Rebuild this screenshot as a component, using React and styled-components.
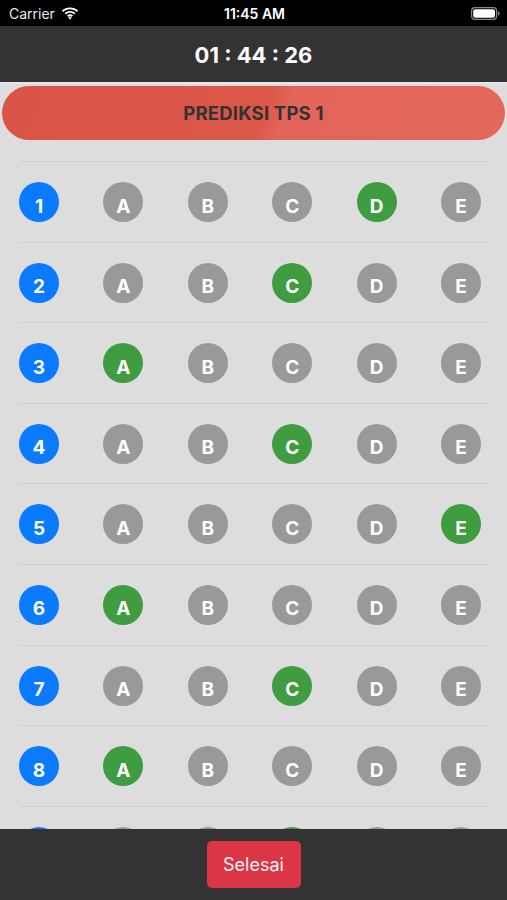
import React from "react";
import styled, { createGlobalStyle } from "styled-components";

const Global = createGlobalStyle`
  html, body { margin: 0; padding: 0; background: #dddddd; }
  body { font-family: "Inter", "Liberation Sans", sans-serif; }
  * { box-sizing: border-box; }
`;

const Screen = styled.div`
  width: 507px;
  height: 900px;
  display: flex;
  flex-direction: column;
  background: #dddddd;
  overflow: hidden;
`;

const StatusBar = styled.div`
  height: 26px;
  flex-shrink: 0;
  background: #000;
  color: #fff;
  display: grid;
  grid-template-columns: 1fr auto 1fr;
  align-items: center;
  padding: 0 7px 0 9px;
  font-size: 14px;
`;

const Carrier = styled.div`
  display: flex;
  align-items: center;
  gap: 6px;
  color: #e8e8e8;
`;

const Clock = styled.div`
  font-weight: 600;
  font-size: 14px;
`;

const BatteryWrap = styled.div`
  justify-self: end;
  display: flex;
  align-items: center;
`;

const Header = styled.div`
  height: 58px;
  flex-shrink: 0;
  background: #333333;
  color: #fff;
  display: flex;
  align-items: center;
  justify-content: center;
  font-size: 22px;
  font-weight: 700;
  padding-top: 1px;
  border-bottom: 2px solid #e6e6e6;
`;

const Content = styled.div`
  flex: 1;
  min-height: 0;
  overflow: hidden;
  display: flex;
  flex-direction: column;
  padding-top: 2px;
`;

const Banner = styled.div`
  height: 54px;
  flex-shrink: 0;
  margin: 0 2px 0 2px;
  border-radius: 27px;
  background: linear-gradient(112deg, #d95347 0%, #db5748 52%, #e2645a 56%, #e4675b 100%);
  color: #333;
  display: flex;
  align-items: center;
  justify-content: center;
  font-size: 18.5px;
  font-weight: 700;
  letter-spacing: 0.2px;
`;

const List = styled.div`
  margin-top: 21px;
  flex-shrink: 0;
  display: flex;
  flex-direction: column;
`;

const Row = styled.div`
  margin: 0 19px 0 20px;
  border-top: 1px solid #cfcfcf;
  padding: 20px 7px 19.6px 0;
  display: flex;
  justify-content: space-between;
  flex-shrink: 0;
`;

const Bubble = styled.div`
  width: 40px;
  height: 40px;
  border-radius: 50%;
  background: ${(p) => (p.$kind === "num" ? "#0a7bff" : p.$kind === "on" ? "#3f9c41" : "#999999")};
  color: #fff;
  font-size: 19px;
  font-weight: 700;
  display: flex;
  align-items: center;
  justify-content: center;
  padding-top: 8px;
  line-height: 1;
`;

const NumBubble = styled(Bubble)`
  margin-left: -1px;
`;

const BottomBar = styled.div`
  height: 71px;
  background: #333333;
  display: flex;
  justify-content: center;
  padding-top: 12px;
  flex-shrink: 0;
`;

const FinishButton = styled.button`
  width: 94px;
  height: 47px;
  border: none;
  border-radius: 5px;
  background: #dc3545;
  color: #f4f4f4;
  font-family: "Inter", "Liberation Sans", sans-serif;
  font-size: 18px;
  padding: 0;
`;

const answers = ["D", "C", "A", "C", "E", "A", "C", "A", "C"];
const letters = ["A", "B", "C", "D", "E"];

function Wifi() {
  return (
    <svg width="18" height="13" viewBox="0 0 18 13">
      <path d="M9 2.2c2.6 0 5 1 6.8 2.7l1.3-1.3C14.9 1.5 12.1.4 9 .4S3.1 1.5.9 3.6l1.3 1.3C4 3.2 6.4 2.2 9 2.2z" fill="#fff" />
      <path d="M9 5.8c1.6 0 3 .6 4.1 1.6l1.3-1.3C13 4.7 11.1 3.9 9 3.9s-4 .8-5.4 2.2l1.3 1.3C6 6.4 7.4 5.8 9 5.8z" fill="#fff" />
      <path d="M9 9.3c.6 0 1.1.2 1.5.6L12 8.4c-.8-.7-1.9-1.2-3-1.2s-2.2.5-3 1.2l1.5 1.5c.4-.4.9-.6 1.5-.6zM9 12.6l1.8-1.8C10.3 10.3 9.7 10 9 10s-1.3.3-1.8.8z" fill="#fff" />
    </svg>
  );
}

function Battery() {
  return (
    <svg width="29" height="13" viewBox="0 0 29 13">
      <rect x="0.6" y="0.6" width="25" height="11.8" rx="3.4" fill="none" stroke="#8a8a8a" strokeWidth="1.2" />
      <rect x="2.2" y="2.2" width="21.8" height="8.6" rx="2" fill="#fff" />
      <path d="M27 4.3c1 .3 1.6 1.2 1.6 2.2s-.6 1.9-1.6 2.2z" fill="#8a8a8a" />
    </svg>
  );
}

export default function App() {
  return (
    <>
      <Global />
      <Screen>
        <StatusBar>
          <Carrier>
            Carrier <Wifi />
          </Carrier>
          <Clock>11:45 AM</Clock>
          <BatteryWrap>
            <Battery />
          </BatteryWrap>
        </StatusBar>
        <Header>01 : 44 : 26</Header>
        <Content>
          <Banner>PREDIKSI TPS 1</Banner>
          <List>
            {answers.map((ans, i) => (
              <Row key={i}>
                <NumBubble $kind="num">{i + 1}</NumBubble>
                {letters.map((l) => (
                  <Bubble key={l} $kind={l === ans ? "on" : "off"}>
                    {l}
                  </Bubble>
                ))}
              </Row>
            ))}
          </List>
        </Content>
        <BottomBar>
          <FinishButton>Selesai</FinishButton>
        </BottomBar>
      </Screen>
    </>
  );
}
